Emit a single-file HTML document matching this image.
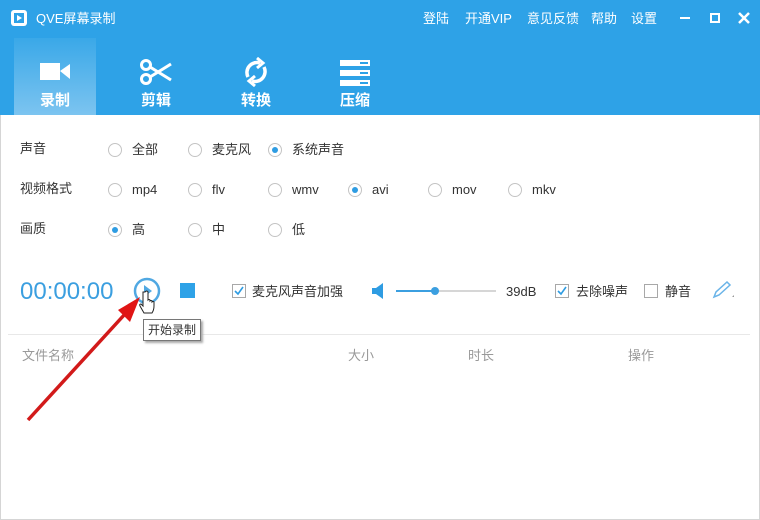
<!DOCTYPE html>
<html><head><meta charset="utf-8"><style>
*{margin:0;padding:0;box-sizing:border-box}
body{width:760px;height:520px;overflow:hidden;background:#fff;font-family:"Liberation Sans","Noto Sans CJK SC",sans-serif;position:relative;font-size:13px;color:#333;line-height:15px}
.hdr{position:absolute;left:0;top:0;width:760px;height:115px;background:#2ea2e7}
.t{position:absolute;white-space:nowrap}
.w{color:#fff}
.tab{position:absolute;top:38px;width:82px;height:77px;text-align:center;color:#fff;font-size:15px;font-weight:bold;line-height:18px}
.tab .l{position:absolute;top:54px;left:0;width:100%}
.act{background:linear-gradient(#3aa8e8,#7cc4f0)}
.rad{position:absolute;width:14px;height:14px;border:1px solid #c4c4c4;border-radius:50%;background:#fff}
.rad.on::after{content:"";position:absolute;left:3px;top:3px;width:6px;height:6px;border-radius:50%;background:#2e9ce2}
.cb{position:absolute;width:14px;height:14px;border:1px solid #a8a8a8;background:#fff}
.g{color:#999}
.frame{position:absolute;left:0;top:115px;width:760px;height:405px;border:1px solid #d5d5d5;border-top:none}
</style></head><body>
<div class="hdr"></div>
<div class="frame"></div>
<svg class="t" style="left:10px;top:9px" width="18" height="18"><rect x="1" y="1" width="16" height="16" rx="3" fill="#fff"/><rect x="4" y="4" width="10" height="10" fill="#2ea2e7"/><path d="M7 6 L12 9 L7 12Z" fill="#fff"/></svg>
<div class="t w" style="left:36px;top:11px;font-size:13px">QVE屏幕录制</div>
<div class="t w" style="left:423px;top:11px">登陆</div>
<div class="t w" style="left:465px;top:11px">开通VIP</div>
<div class="t w" style="left:527px;top:11px">意见反馈</div>
<div class="t w" style="left:591px;top:11px">帮助</div>
<div class="t w" style="left:631px;top:11px">设置</div>
<div class="t" style="left:680px;top:17px;width:10px;height:2px;background:#fff"></div>
<div class="t" style="left:710px;top:13px;width:10px;height:10px;border:2px solid #fff"></div>
<svg class="t" style="left:738px;top:12px" width="12" height="12" stroke="#fff" stroke-width="2.5"><path d="M1 1 L11 11 M11 1 L1 11"/></svg>
<div class="tab act" style="left:14px"><svg class="t" style="left:25px;top:22px" width="32" height="22"><rect x="1" y="3" width="20" height="17" fill="#fff"/><path d="M21 11 L31 4 L31 19Z" fill="#fff"/></svg><div class="l">录制</div></div>
<div class="tab" style="left:115px"><svg class="t" style="left:24px;top:20px" width="34" height="28" fill="none" stroke="#fff" stroke-width="3"><circle cx="7" cy="7" r="4.5"/><circle cx="7" cy="21" r="4.5"/><path d="M11 9 L32 22 M11 19 L32 6"/></svg><div class="l">剪辑</div></div>
<div class="tab" style="left:215px"><svg class="t" style="left:27px;top:19px" width="28" height="30" fill="none" stroke="#fff" stroke-width="3.5"><path d="M6 20 A10 10 0 0 1 18 6"/><path d="M22 10 A10 10 0 0 1 10 24"/><path d="M15 1 L21 6 L15 11" stroke-width="3"/><path d="M13 19 L7 24 L13 29" stroke-width="3"/></svg><div class="l">转换</div></div>
<div class="tab" style="left:314px"><svg class="t" style="left:26px;top:22px" width="30" height="26"><rect x="0" y="0" width="30" height="6" fill="#fff"/><rect x="0" y="10" width="30" height="6" fill="#fff"/><rect x="0" y="20" width="30" height="6" fill="#fff"/><rect x="20" y="2" width="8" height="2" fill="#2ea2e7"/><rect x="20" y="12" width="8" height="2" fill="#2ea2e7"/><rect x="20" y="22" width="8" height="2" fill="#2ea2e7"/></svg><div class="l">压缩</div></div>

<div class="t" style="left:20px;top:141px">声音</div>
<div class="rad" style="left:108px;top:143px"></div><div class="t" style="left:132px;top:142px">全部</div>
<div class="rad" style="left:188px;top:143px"></div><div class="t" style="left:212px;top:142px">麦克风</div>
<div class="rad on" style="left:268px;top:143px"></div><div class="t" style="left:292px;top:142px">系统声音</div>

<div class="t" style="left:20px;top:181px">视频格式</div>
<div class="rad" style="left:108px;top:183px"></div><div class="t" style="left:132px;top:182px">mp4</div>
<div class="rad" style="left:188px;top:183px"></div><div class="t" style="left:212px;top:182px">flv</div>
<div class="rad" style="left:268px;top:183px"></div><div class="t" style="left:292px;top:182px">wmv</div>
<div class="rad on" style="left:348px;top:183px"></div><div class="t" style="left:372px;top:182px">avi</div>
<div class="rad" style="left:428px;top:183px"></div><div class="t" style="left:452px;top:182px">mov</div>
<div class="rad" style="left:508px;top:183px"></div><div class="t" style="left:532px;top:182px">mkv</div>

<div class="t" style="left:20px;top:221px">画质</div>
<div class="rad on" style="left:108px;top:223px"></div><div class="t" style="left:132px;top:222px">高</div>
<div class="rad" style="left:188px;top:223px"></div><div class="t" style="left:212px;top:222px">中</div>
<div class="rad" style="left:268px;top:223px"></div><div class="t" style="left:292px;top:222px">低</div>

<div class="t" style="left:20px;top:278px;font-size:24px;line-height:28px;color:#3b9fe0">00:00:00</div>
<svg class="t" style="left:133px;top:277px" width="28" height="28"><circle cx="14" cy="14" r="12" fill="none" stroke="#50a8e2" stroke-width="2.5"/><path d="M11 8 L19 14 L11 20Z" fill="#50a8e2"/></svg>
<div class="t" style="left:180px;top:283px;width:15px;height:15px;background:#2ea2e7"></div>
<div class="cb" style="left:232px;top:284px"></div><svg class="t" style="left:232px;top:284px" width="14" height="14" fill="none" stroke="#2e9ce2" stroke-width="1.6"><path d="M3 7 L6 10 L11 3"/></svg>
<div class="t" style="left:252px;top:284px">麦克风声音加强</div>
<svg class="t" style="left:371px;top:282px" width="18" height="18"><path d="M1 6 H5 L12 1 V17 L5 12 H1Z" fill="#2e9ce2"/></svg>
<div class="t" style="left:396px;top:290px;width:40px;height:2px;background:#3b9fe0"></div>
<div class="t" style="left:436px;top:290px;width:60px;height:2px;background:#d6d6d6"></div>
<div class="t" style="left:431px;top:287px;width:8px;height:8px;border-radius:50%;background:#3b9fe0"></div>
<div class="t" style="left:506px;top:284px">39dB</div>
<div class="cb" style="left:555px;top:284px"></div><svg class="t" style="left:555px;top:284px" width="14" height="14" fill="none" stroke="#2e9ce2" stroke-width="1.6"><path d="M3 7 L6 10 L11 3"/></svg>
<div class="t" style="left:576px;top:284px">去除噪声</div>
<div class="cb" style="left:644px;top:284px"></div>
<div class="t" style="left:665px;top:284px">静音</div>
<svg class="t" style="left:712px;top:280px" width="24" height="20" fill="none" stroke="#6ab4e8" stroke-width="1.5"><path d="M2 17 L4 12 L15 2 L18 5 L7 15Z"/><path d="M20 17 L22 15 V17Z" fill="#999" stroke="none"/></svg>

<div class="t" style="left:8px;top:334px;width:742px;height:1px;background:#e8e8e8"></div>
<div class="t g" style="left:22px;top:348px">文件名称</div>
<div class="t g" style="left:348px;top:348px">大小</div>
<div class="t g" style="left:468px;top:348px">时长</div>
<div class="t g" style="left:628px;top:348px">操作</div>

<div class="t" style="left:143px;top:319px;border:1px solid #777;background:#fff;padding:3px 4px;font-size:12px;line-height:14px;box-shadow:2px 2px 2px #aaa">开始录制</div>
<svg class="t" style="left:0;top:280px" width="170" height="150"><path d="M28 140 L125 34" stroke="#d21a1a" stroke-width="3.5"/><path d="M140 17 L118 30 L130 42Z" fill="#e01515"/><path d="M143 12 v14 l-2 -2 q-2 0 -1 2 l4 7 h8 q2 -3 2 -7 v-4 q-1 -1 -2 0 v-1 q-1 -1 -2 0 v-1 q-1 -1 -2 0 v-8 q-1 -2 -3 0z" fill="#fff" stroke="#222" stroke-width="1"/></svg>
</body></html>
